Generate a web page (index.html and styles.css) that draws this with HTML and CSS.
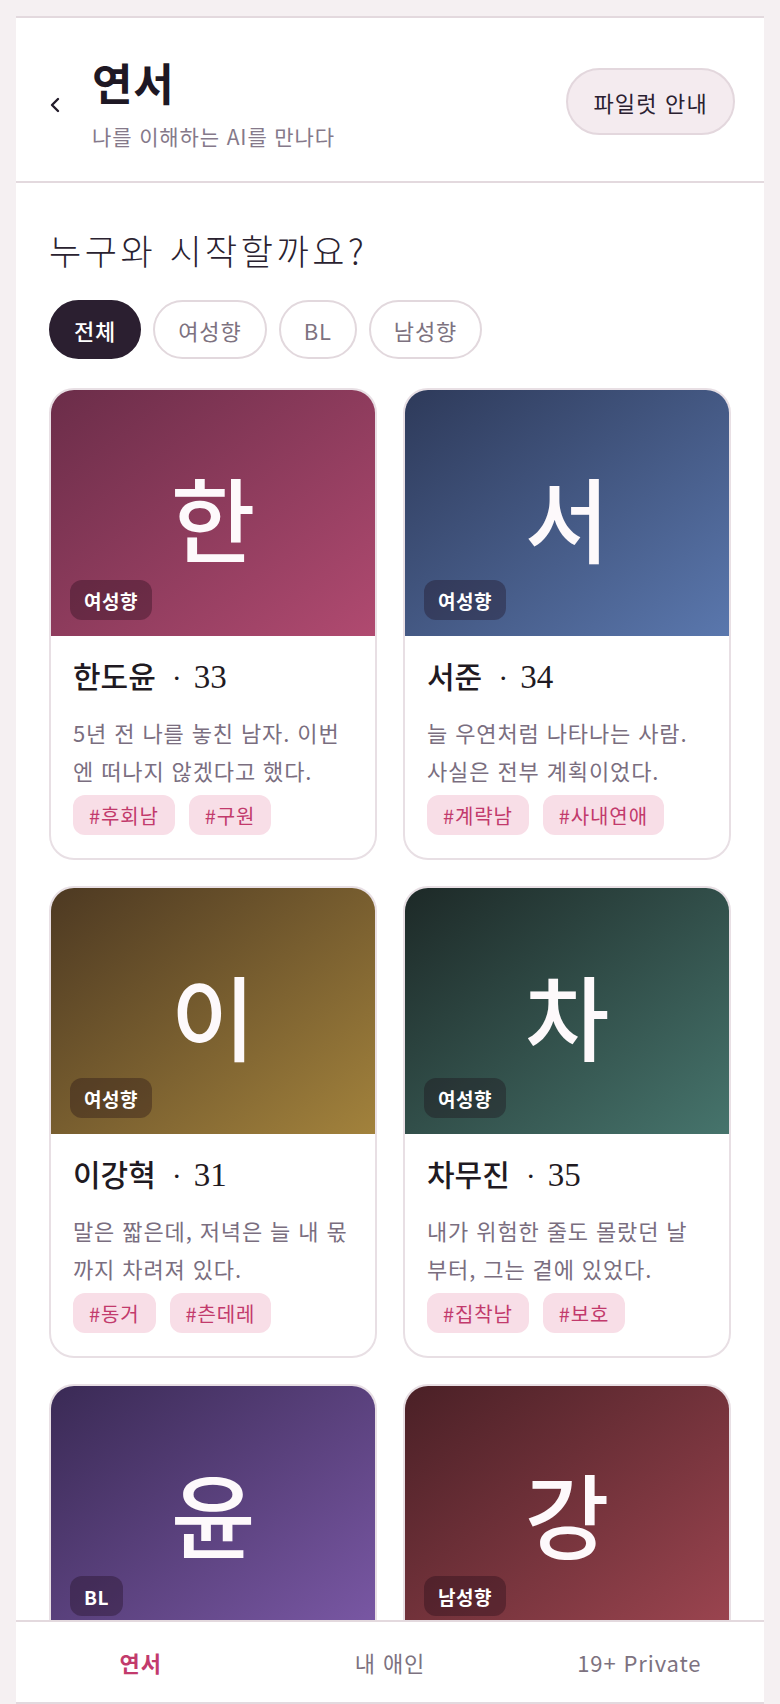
FILE: index.html
```html
<!DOCTYPE html>
<html lang="ko">
<head>
<meta charset="UTF-8">
<title>연서</title>
<link rel="stylesheet" href="styles.css">
</head>
<body>
<div class="app">
	<header class="top-bar">
		<a class="back" href="#">
			<svg width="10" height="16" viewBox="0 0 10 16"><polyline points="8,2 2,8 8,14" fill="none" stroke="#231c2a" stroke-width="2.4" stroke-linecap="round" stroke-linejoin="round"/></svg>
		</a>
		<div class="brand">
			<h1>연서</h1>
			<p>나를 이해하는 AI를 만나다</p>
		</div>
		<button class="pilot-btn">파일럿 안내</button>
	</header>

	<main class="content">
		<h2 class="question">누구와 시작할까요?</h2>
		<div class="filters">
			<span class="chip active">전체</span>
			<span class="chip">여성향</span>
			<span class="chip">BL</span>
			<span class="chip">남성향</span>
		</div>

		<div class="card-grid">
			<div class="card">
				<div class="card-cover cover-han">
					<span class="cover-letter">한</span>
					<span class="badge">여성향</span>
				</div>
				<div class="card-body">
					<h3 class="card-name">한도윤<span class="dot">·</span><span class="age">33</span></h3>
					<p class="card-desc">5년 전 나를 놓친 남자. 이번엔 떠나지 않겠다고 했다.</p>
					<div class="tags"><span class="tag">#후회남</span><span class="tag">#구원</span></div>
				</div>
			</div>

			<div class="card">
				<div class="card-cover cover-seo">
					<span class="cover-letter">서</span>
					<span class="badge">여성향</span>
				</div>
				<div class="card-body">
					<h3 class="card-name">서준<span class="dot">·</span><span class="age">34</span></h3>
					<p class="card-desc">늘 우연처럼 나타나는 사람. 사실은 전부 계획이었다.</p>
					<div class="tags"><span class="tag">#계략남</span><span class="tag">#사내연애</span></div>
				</div>
			</div>

			<div class="card">
				<div class="card-cover cover-lee">
					<span class="cover-letter">이</span>
					<span class="badge">여성향</span>
				</div>
				<div class="card-body">
					<h3 class="card-name">이강혁<span class="dot">·</span><span class="age">31</span></h3>
					<p class="card-desc">말은 짧은데, 저녁은 늘 내 몫까지 차려져 있다.</p>
					<div class="tags"><span class="tag">#동거</span><span class="tag">#츤데레</span></div>
				</div>
			</div>

			<div class="card">
				<div class="card-cover cover-cha">
					<span class="cover-letter">차</span>
					<span class="badge">여성향</span>
				</div>
				<div class="card-body">
					<h3 class="card-name">차무진<span class="dot">·</span><span class="age">35</span></h3>
					<p class="card-desc">내가 위험한 줄도 몰랐던 날부터, 그는 곁에 있었다.</p>
					<div class="tags"><span class="tag">#집착남</span><span class="tag">#보호</span></div>
				</div>
			</div>

			<div class="card">
				<div class="card-cover cover-yoon">
					<span class="cover-letter">윤</span>
					<span class="badge">BL</span>
				</div>
				<div class="card-body">
					<h3 class="card-name">윤재하<span class="dot">·</span><span class="age">29</span></h3>
					<p class="card-desc">십 년 지기 친구. 오늘따라 눈을 피한다.</p>
					<div class="tags"><span class="tag">#친구</span><span class="tag">#짝사랑</span></div>
				</div>
			</div>

			<div class="card">
				<div class="card-cover cover-kang">
					<span class="cover-letter">강</span>
					<span class="badge">남성향</span>
				</div>
				<div class="card-body">
					<h3 class="card-name">강서하<span class="dot">·</span><span class="age">27</span></h3>
					<p class="card-desc">무뚝뚝한 선배. 퇴근길엔 늘 같은 방향이다.</p>
					<div class="tags"><span class="tag">#선배</span><span class="tag">#직진</span></div>
				</div>
			</div>
		</div>
	</main>

	<nav class="bottom-nav">
		<a class="nav-item active" href="#">연서</a>
		<a class="nav-item" href="#">내 애인</a>
		<a class="nav-item" href="#">19+ Private</a>
	</nav>
</div>
</body>
</html>
```

FILE: styles.css
```css
body{
	margin:0;
	background:#f5f0f2;
	font-family:"Noto Sans CJK KR", "Noto Sans", sans-serif;
	letter-spacing:0.055em;
	color:#1e1824;
}

.app{
	width:748px;
	height:calc(100vh - 16px);
	margin:16px auto 0;
	background:#fff;
	border-top:2px solid #e3d9de;
	display:flex;
	flex-direction:column;
	box-sizing:border-box;
}

/* en-tete */
.top-bar{
	display:flex;
	align-items:center;
	height:165px;
	padding:0 29px 0 34px;
	border-bottom:2px solid #e3d9de;
	box-sizing:border-box;
	flex-shrink:0;
}

.back{
	display:flex;
	width:10px;
	margin:10px 32px 0 0;
}

.brand{
	padding-top:6px;
}

.brand h1{
	margin:0;
	font-size:44px;
	line-height:52px;
	font-weight:700;
	letter-spacing:0.02em;
	color:#1e1824;
}

.brand p{
	margin:15px 0 0;
	font-size:21px;
	line-height:26px;
	color:#85798a;
}

.pilot-btn{
	margin:4px 0 0 auto;
	height:67px;
	padding:0 25px;
	border-radius:34px;
	background:#f4ebef;
	border:2px solid #e3d7dd;
	font:22px "Noto Sans CJK KR", sans-serif;
	letter-spacing:0.055em;
	color:#2a2030;
}

/* contenu */
.content{
	flex:1;
	overflow:hidden;
	padding:44px 33px 0;
}

.question{
	margin:0;
	font-size:35px;
	line-height:46px;
	font-weight:300;
	letter-spacing:0.1em;
	color:#2a2230;
}

.filters{
	display:flex;
	gap:12px;
	margin-top:27px;
}

.chip{
	display:flex;
	align-items:center;
	height:59px;
	padding:0 23px;
	border-radius:30px;
	border:2px solid #e2d8dd;
	box-sizing:border-box;
	font-size:22px;
	color:#7d7280;
}

.chip.active{
	background:#2b1f30;
	border-color:#2b1f30;
	color:#fff;
	font-weight:500;
}

.card-grid{
	display:grid;
	grid-template-columns:1fr 1fr;
	gap:26px;
	margin-top:29px;
}

.card{
	border:2px solid #e8dfe4;
	border-radius:25px;
	overflow:hidden;
	background:#fff;
}

.card-cover{
	position:relative;
	height:246px;
	display:flex;
	align-items:center;
	justify-content:center;
}

.cover-han{ background:linear-gradient(to bottom right, #6b2d49, #b04a70); }
.cover-seo{ background:linear-gradient(to bottom right, #2e3a5a, #5a77ad); }
.cover-lee{ background:linear-gradient(to bottom right, #4d3922, #a2823c); }
.cover-cha{ background:linear-gradient(to bottom right, #1d2927, #46746c); }
.cover-yoon{ background:linear-gradient(to bottom right, #3a2a55, #7a58a5); }
.cover-kang{ background:linear-gradient(to bottom right, #4a2026, #9c4550); }

.cover-letter{
	margin-top:6px;
	font-size:92px;
	line-height:1;
	font-weight:500;
	letter-spacing:0;
	color:#fdf9fb;
}

.badge{
	position:absolute;
	left:19px;
	bottom:16px;
	display:flex;
	align-items:center;
	height:40px;
	padding:0 14px;
	border-radius:12px;
	background:rgba(25,5,18,0.32);
	color:#fff;
	font-size:19px;
	font-weight:700;
	letter-spacing:0.03em;
}

.card-body{
	padding:22px 22px 23px;
}

.card-name{
	margin:0;
	font-family:"Liberation Serif", "Noto Sans CJK KR", serif;
	font-size:30px;
	line-height:39px;
	font-weight:500;
	letter-spacing:0;
	color:#1f1a22;
}

.card-name .dot{
	margin:0 12px 0 16px;
}

.card-name .age{
	font-size:33px;
	font-weight:400;
}

.card-desc{
	margin:16px 4px 0 0;
	font-size:22px;
	line-height:38px;
	color:#7a6e7f;
}

.tags{
	display:flex;
	gap:14px;
	margin-top:6px;
}

.tag{
	display:flex;
	align-items:center;
	height:40px;
	padding:0 16px;
	border-radius:12px;
	background:#f8dee7;
	color:#c23a6c;
	font-size:20px;
}

/* barre du bas */
.bottom-nav{
	display:grid;
	grid-template-columns:repeat(3, 1fr);
	height:84px;
	border-top:2px solid #e3d9de;
	border-bottom:2px solid #e3d9de;
	box-sizing:border-box;
	flex-shrink:0;
	background:#fff;
}

.nav-item{
	display:flex;
	align-items:center;
	justify-content:center;
	font-size:22px;
	color:#7d7280;
	text-decoration:none;
}

.nav-item.active{
	color:#c23a6c;
	font-weight:700;
}
```
